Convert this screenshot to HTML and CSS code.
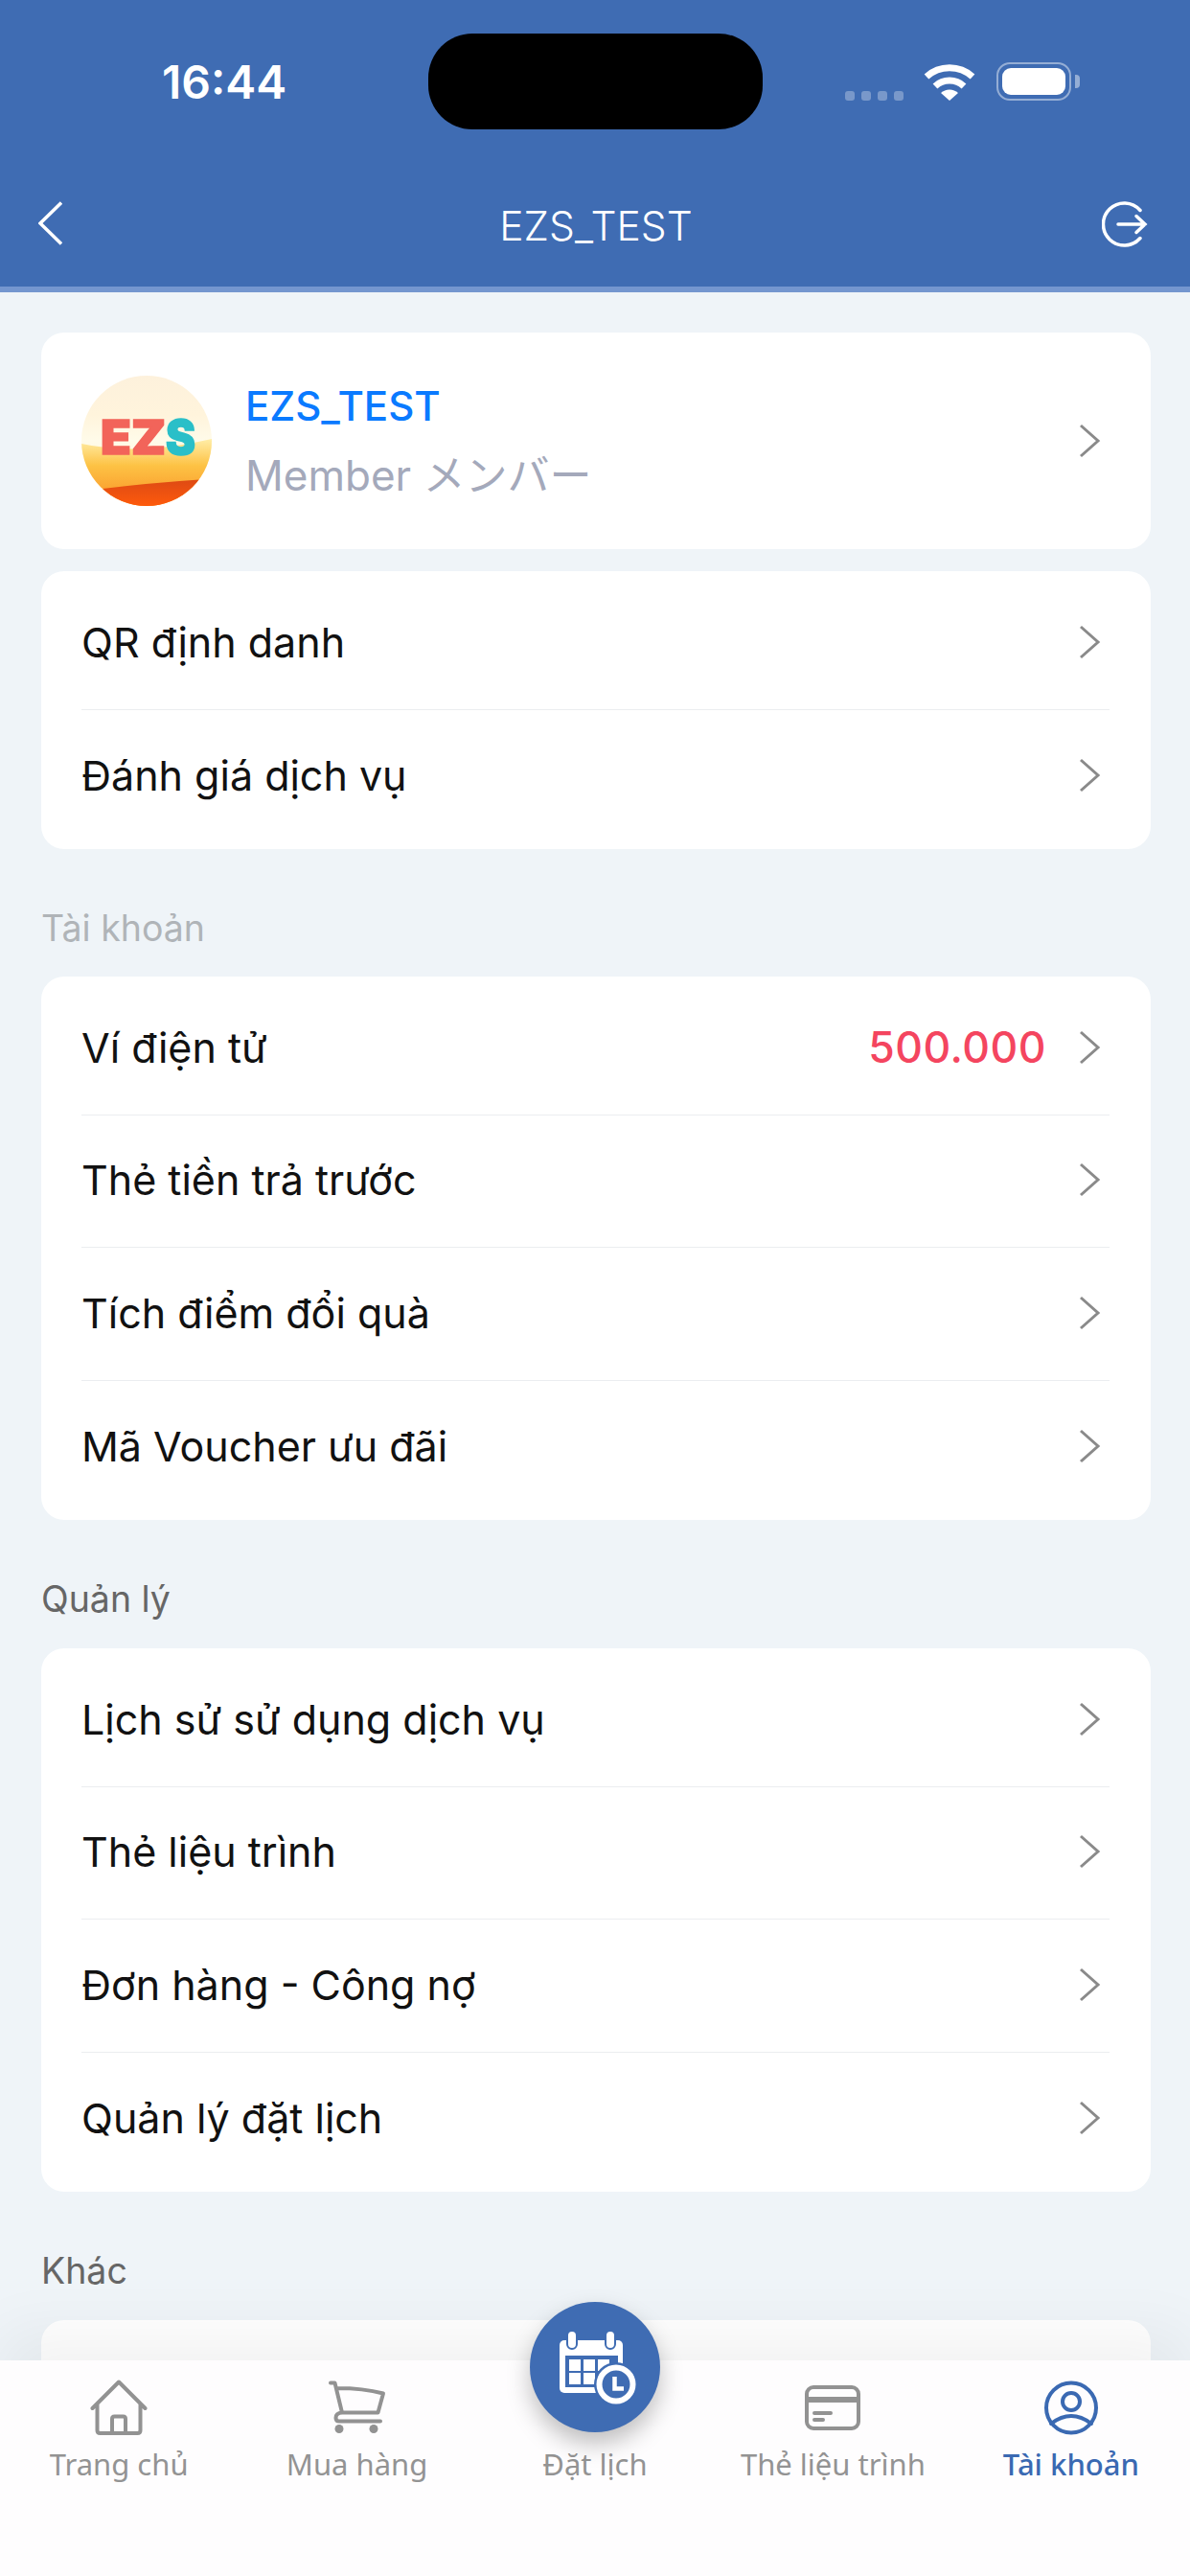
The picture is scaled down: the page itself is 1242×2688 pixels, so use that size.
FILE: index.html
```html
<!DOCTYPE html>
<html lang="vi">
<head>
    <meta charset="UTF-8">
    <meta name="viewport" content="width=device-width, initial-scale=1.0">
    <title>Tài khoản</title>
    <link rel="stylesheet" href="styles.css">
</head>
<body>
    <div class="phone">
        <header class="header">
            <div class="status-bar">
                <span class="time">16:44</span>
                <div class="island"></div>
                <div class="status-icons">
                    <div class="signal"><i></i><i></i><i></i><i></i></div>
                    <svg class="wifi" width="54" height="39" viewBox="0 0 54 39">
                        <path d="M3 14A36 36 0 0 1 51 14" fill="none" stroke="#fff" stroke-width="7"/>
                        <path d="M12 24A22 22 0 0 1 42 24" fill="none" stroke="#fff" stroke-width="7"/>
                        <path d="M18 31A13 13 0 0 1 36 31L27 39Z" fill="#fff"/>
                    </svg>
                    <div class="battery"><div class="battery-fill"></div></div>
                    <div class="battery-nub"></div>
                </div>
            </div>
            <div class="title-bar">
                <div class="title-side">
                    <svg width="25" height="46" viewBox="0 0 25 46">
                        <path d="M24 1.5L2 23L24 44.5" fill="none" stroke="#fff" stroke-width="3.5"/>
                    </svg>
                </div>
                <h1 class="title">EZS_TEST</h1>
                <div class="title-side right">
                    <svg width="48" height="48" viewBox="0 0 48 48">
                        <path d="M40 9.5A22 22 0 1 0 40 38.5" fill="none" stroke="#fff" stroke-width="3.5" stroke-linecap="round"/>
                        <path d="M17 24H45M36 15.5L45 24L36 32.5" fill="none" stroke="#fff" stroke-width="3.5" stroke-linecap="round"/>
                    </svg>
                </div>
            </div>
        </header>

        <main class="content">
            <section class="card profile">
                <svg class="avatar" width="136" height="136" viewBox="0 0 136 136">
                    <defs>
                        <clipPath id="disc"><circle cx="68" cy="68" r="68"/></clipPath>
                        <linearGradient id="sky" x1="0" y1="0" x2="0" y2="1">
                            <stop offset="0" stop-color="#fdf1dc"/>
                            <stop offset="0.3" stop-color="#fff4dc"/>
                            <stop offset="0.5" stop-color="#fffbe9"/>
                            <stop offset="1" stop-color="#fff3c8"/>
                        </linearGradient>
                        <linearGradient id="sand" x1="0" y1="0" x2="0" y2="1">
                            <stop offset="0" stop-color="#ffeea8"/>
                            <stop offset="0.4" stop-color="#fdc244"/>
                            <stop offset="1" stop-color="#f98f25"/>
                        </linearGradient>
                        <linearGradient id="dune" x1="0" y1="0" x2="0" y2="1">
                            <stop offset="0" stop-color="#dd4a14"/>
                            <stop offset="1" stop-color="#fe5a0c"/>
                        </linearGradient>
                    </defs>
                    <g clip-path="url(#disc)">
                        <rect width="136" height="136" fill="url(#sky)"/>
                        <path d="M0 71Q60 84 136 66V136H0Z" fill="url(#sand)"/>
                        <path d="M22 118Q70 112 130 108V136H22Z" fill="url(#dune)"/>
                    </g>
                    <text class="logo-text" x="20" y="82" fill="#f2645a" stroke="#f2645a" textLength="68" lengthAdjust="spacingAndGlyphs">EZ</text>
                    <text class="logo-text" x="88" y="82" fill="#2abfc8" stroke="#2abfc8" textLength="31" lengthAdjust="spacingAndGlyphs">S</text>
                </svg>
                <div class="profile-info">
                    <div class="profile-name">EZS_TEST</div>
                    <div class="profile-role">Member メンバー</div>
                </div>
                <svg class="chevron" width="24" height="36" viewBox="0 0 24 36"><path d="M3 2L21 18L3 34"/></svg>
            </section>

            <section class="card list">
                <div class="row"><span>QR định danh</span><svg class="chevron" width="24" height="36" viewBox="0 0 24 36"><path d="M3 2L21 18L3 34"/></svg></div>
                <div class="row"><span>Đánh giá dịch vụ</span><svg class="chevron" width="24" height="36" viewBox="0 0 24 36"><path d="M3 2L21 18L3 34"/></svg></div>
            </section>

            <h2 class="section-label muted">Tài khoản</h2>
            <section class="card list">
                <div class="row"><span>Ví điện tử</span><b class="amount">500.000</b><svg class="chevron" width="24" height="36" viewBox="0 0 24 36"><path d="M3 2L21 18L3 34"/></svg></div>
                <div class="row"><span>Thẻ tiền trả trước</span><svg class="chevron" width="24" height="36" viewBox="0 0 24 36"><path d="M3 2L21 18L3 34"/></svg></div>
                <div class="row"><span>Tích điểm đổi quà</span><svg class="chevron" width="24" height="36" viewBox="0 0 24 36"><path d="M3 2L21 18L3 34"/></svg></div>
                <div class="row"><span>Mã Voucher ưu đãi</span><svg class="chevron" width="24" height="36" viewBox="0 0 24 36"><path d="M3 2L21 18L3 34"/></svg></div>
            </section>

            <h2 class="section-label">Quản lý</h2>
            <section class="card list">
                <div class="row"><span>Lịch sử sử dụng dịch vụ</span><svg class="chevron" width="24" height="36" viewBox="0 0 24 36"><path d="M3 2L21 18L3 34"/></svg></div>
                <div class="row"><span>Thẻ liệu trình</span><svg class="chevron" width="24" height="36" viewBox="0 0 24 36"><path d="M3 2L21 18L3 34"/></svg></div>
                <div class="row"><span>Đơn hàng - Công nợ</span><svg class="chevron" width="24" height="36" viewBox="0 0 24 36"><path d="M3 2L21 18L3 34"/></svg></div>
                <div class="row"><span>Quản lý đặt lịch</span><svg class="chevron" width="24" height="36" viewBox="0 0 24 36"><path d="M3 2L21 18L3 34"/></svg></div>
            </section>

            <h2 class="section-label">Khác</h2>
            <section class="card list last"></section>
        </main>

        <nav class="tabbar">
            <div class="tab">
                <svg class="tab-icon" width="60" height="60" viewBox="0 0 60 60">
                    <path d="M2.5 31L30 3.5L57.500 31M7.500 26V54Q7.500 57 10.500 57H49.500Q52.500 57 52.500 54V26M23 56V42Q23 39.500 25.500 39.500H34.500Q37 39.500 37 42V56"/>
                </svg>
                <span>Trang chủ</span>
            </div>
            <div class="tab">
                <svg class="tab-icon" width="60" height="60" viewBox="0 0 60 60">
                    <path d="M2 4.500H6.500L14 35.500H51.500L57 15.500Q36 10 9 10M14 35.500Q7.500 36 7.500 41Q7.500 44.500 11 44.500H54"/>
                    <circle class="solid" cx="11" cy="52.500" r="4.500"/>
                    <circle class="solid" cx="47" cy="52.500" r="4.500"/>
                </svg>
                <span>Mua hàng</span>
            </div>
            <div class="tab">
                <div class="fab">
                    <svg width="136" height="136" viewBox="0 0 136 136">
                        <rect x="31" y="40" width="66" height="55" rx="5" fill="#fff"/>
                        <rect x="37" y="56" width="55" height="33" fill="#3f6cb3"/>
                        <rect x="41" y="60" width="12" height="12" fill="#fff"/>
                        <rect x="56" y="60" width="12" height="12" fill="#fff"/>
                        <rect x="71" y="60" width="12" height="12" fill="#fff"/>
                        <rect x="41" y="74" width="12" height="12" fill="#fff"/>
                        <rect x="56" y="74" width="12" height="12" fill="#fff"/>
                        <rect x="39" y="30" width="10" height="19" rx="5" fill="#fff" stroke="#3f6cb3" stroke-width="2"/>
                        <rect x="79" y="30" width="10" height="19" rx="5" fill="#fff" stroke="#3f6cb3" stroke-width="2"/>
                        <circle cx="90" cy="86" r="23" fill="#3f6cb3"/>
                        <circle cx="90" cy="86" r="17.500" fill="#3f6cb3" stroke="#fff" stroke-width="6"/>
                        <path d="M88.500 78V90.500H98" fill="none" stroke="#fff" stroke-width="4.500"/>
                    </svg>
                </div>
                <div class="tab-spacer"></div>
                <span>Đặt lịch</span>
            </div>
            <div class="tab">
                <svg class="tab-icon" width="60" height="60" viewBox="0 0 60 60">
                    <rect x="3" y="9" width="54" height="43" rx="7"/>
                    <path class="thick" d="M3 22H57"/>
                    <path d="M11 36H28M11 43H20"/>
                </svg>
                <span>Thẻ liệu trình</span>
            </div>
            <div class="tab active">
                <svg class="tab-icon" width="60" height="60" viewBox="0 0 60 60">
                    <circle cx="30" cy="30.500" r="26"/>
                    <circle cx="30" cy="24" r="9"/>
                    <path d="M9 47Q30 31 51 47"/>
                </svg>
                <span>Tài khoản</span>
            </div>
        </nav>
    </div>
</body>
</html>
```

FILE: styles.css
```css
* {
    box-sizing: border-box;
}

body {
    margin: 0;
    font-family: Inter, "Noto Sans CJK JP", sans-serif;
    background-color: #eff4f8;
}

.phone {
    position: relative;
    width: 1242px;
    height: 2688px;
    overflow: hidden;
    background-color: #eff4f8;
}

.header {
    height: 305px;
    background-color: #3f6cb3;
    border-bottom: 6px solid #7496cf;
    color: #ffffff;
}

.status-bar {
    position: relative;
    height: 186px;
    padding: 58px 43px 0 169px;
    display: flex;
    justify-content: space-between;
}

.time {
    font-size: 48px;
    font-weight: 600;
    line-height: 56px;
}

.island {
    position: absolute;
    left: 447px;
    top: 35px;
    width: 349px;
    height: 100px;
    border-radius: 46px;
    background-color: #000000;
}

.status-icons {
    position: absolute;
    left: 882px;
    top: 65px;
    display: flex;
    align-items: center;
}

.signal {
    display: flex;
    gap: 7px;
    margin-top: 29px;
    margin-right: 21px;
}

.signal i {
    width: 10px;
    height: 10px;
    border-radius: 3px;
    background-color: rgba(255, 255, 255, 0.3);
}

.wifi {
    margin-right: 22px;
}

.battery {
    width: 78px;
    height: 40px;
    padding: 4px;
    border: 2px solid rgba(255, 255, 255, 0.45);
    border-radius: 14px;
}

.battery-fill {
    width: 100%;
    height: 100%;
    border-radius: 9px;
    background-color: #ffffff;
}

.battery-nub {
    width: 5px;
    height: 14px;
    margin-left: 4px;
    border-radius: 0 4px 4px 0;
    background-color: rgba(255, 255, 255, 0.45);
}

.title-bar {
    height: 113px;
    padding: 24px 44px 0 40px;
    display: flex;
    align-items: flex-start;
}

.title-side {
    flex: 1;
    display: flex;
}

.title-side.right {
    justify-content: flex-end;
}

.title {
    margin: 3px 0 0 6px;
    font-size: 42.5px;
    font-weight: 300;
    line-height: 46px;
}

.content {
    padding: 42px 41px 0 43px;
}

.card {
    background-color: #ffffff;
    border-radius: 24px;
}

.profile {
    height: 226px;
    margin-bottom: 23px;
    padding: 0 52px 0 42px;
    display: flex;
    align-items: center;
}

.avatar {
    flex-shrink: 0;
    margin-right: 35px;
}

.logo-text {
    font-family: Inter, sans-serif;
    font-size: 50px;
    font-weight: 900;
    stroke-width: 1.5;
}

.profile-info {
    flex: 1;
}

.profile-name {
    font-size: 42px;
    font-weight: 500;
    line-height: 50px;
    color: #0a7aff;
}

.profile-role {
    margin-top: 22px;
    font-size: 44px;
    line-height: 50px;
    color: #a4a9bb;
}

.chevron {
    flex-shrink: 0;
}

.chevron path {
    fill: none;
    stroke: #8a8a8a;
    stroke-width: 3;
}

.list {
    padding: 6px 43px 7px 42px;
}

.row {
    height: 138.5px;
    padding-right: 9px;
    padding-bottom: 2px;
    display: flex;
    align-items: center;
    font-size: 43px;
    color: #111111;
    border-bottom: 1px solid #ebedf0;
}

.row:last-child {
    border-bottom: none;
}

.row span {
    flex: 1;
}

.amount {
    margin-right: 33px;
    font-size: 44.500px;
    font-weight: 500;
    letter-spacing: 0.500px;
    color: #f4455f;
}

.section-label {
    height: 134px;
    margin: 0;
    padding-top: 61px;
    font-size: 37.500px;
    font-weight: 400;
    line-height: 44px;
    color: #666666;
}

.section-label.muted {
    height: 133px;
    color: #b0b4b8;
}

.last {
    height: 300px;
}

.tabbar {
    position: absolute;
    left: 0;
    bottom: 0;
    width: 100%;
    height: 225px;
    padding-top: 19px;
    display: grid;
    grid-template-columns: repeat(5, 1fr);
    align-items: start;
    background-color: #fefdfe;
    box-shadow: 0 -30px 60px rgba(0, 0, 0, 0.05);
}

.tab {
    position: relative;
    display: flex;
    flex-direction: column;
    align-items: center;
    font-family: "Noto Sans", sans-serif;
    font-size: 31px;
    line-height: 40px;
    color: #939393;
}

.tab-icon {
    margin-bottom: 9px;
    fill: none;
    stroke: #929292;
    stroke-width: 4;
    stroke-linejoin: round;
    stroke-linecap: round;
}

.tab-icon .solid {
    fill: #929292;
    stroke: none;
}

.tab-icon .thick {
    stroke-width: 6;
    stroke-linecap: butt;
}

.tab-spacer {
    height: 69px;
}

.fab {
    position: absolute;
    left: 56px;
    top: -80px;
    width: 136px;
    height: 136px;
    border-radius: 50%;
    background-color: #3f6cb3;
    box-shadow: 0 12px 24px rgba(0, 0, 0, 0.25);
}

.active {
    color: #3a69b2;
    font-weight: 500;
}

.active .tab-icon {
    stroke: #3a69b2;
}
```
